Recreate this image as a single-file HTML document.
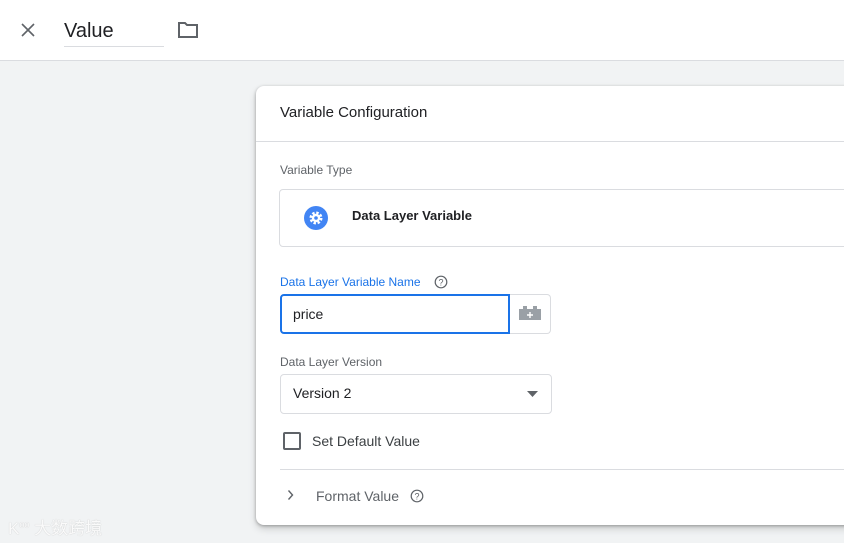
<!DOCTYPE html>
<html><head><style>
*{box-sizing:border-box;margin:0;padding:0}
body{width:844px;height:543px;overflow:hidden;background:#f1f3f4;font-family:"Liberation Sans",sans-serif;position:relative;color:#202124}
.top{position:absolute;left:0;top:0;width:844px;height:61px;background:#fff;border-bottom:1px solid #dadce0}
.abs{position:absolute}
.card{position:absolute;left:256px;top:86px;width:600px;height:439px;background:#fff;border-radius:8px;box-shadow:0 1px 3px rgba(0,0,0,.3),0 4px 8px rgba(0,0,0,.15)}
.lbl{font-size:12px;color:#5f6368}
</style></head><body>
<div class="top">
<svg class="abs" style="left:20px;top:22px" width="16" height="16" viewBox="0 0 16 16"><path d="M2 2L14 14M14 2L2 14" stroke="#5f6368" stroke-width="1.6"/></svg>
<div class="abs" style="left:64px;top:20px;font-size:20px;color:#202124">Value</div>
<div class="abs" style="left:64px;top:46px;width:100px;height:1px;background:#dadce0"></div>
<svg class="abs" style="left:177px;top:21px" width="22" height="18" viewBox="0 0 22 18"><path d="M2 2h6l2 2h10v12H2z" fill="none" stroke="#5f6368" stroke-width="2"/></svg>
</div>
<div class="card">
<div class="abs" style="left:24px;top:18px;font-size:15px;color:#202124">Variable Configuration</div>
<div class="abs" style="left:0;top:55px;width:600px;height:1px;background:#dadce0"></div>
<div class="abs lbl" style="left:24px;top:77px">Variable Type</div>
<div class="abs" style="left:23px;top:103px;width:600px;height:58px;border:1px solid #dadce0;border-radius:4px"></div>
<svg class="abs" style="left:47px;top:119px" width="26" height="26" viewBox="0 0 26 26"><circle cx="13" cy="13" r="12" fill="#4285f4"/><circle cx="13" cy="13" r="5.2" fill="none" stroke="#fff" stroke-width="2.6" stroke-dasharray="2.4 1.7"/><circle cx="13" cy="13" r="4.2" fill="#fff"/><circle cx="13" cy="13" r="1.8" fill="#4285f4"/></svg>
<div class="abs" style="left:96px;top:122px;font-size:13px;font-weight:bold;color:#202124">Data Layer Variable</div>
<div class="abs" style="left:24px;top:189px;font-size:12px;color:#1a73e8">Data Layer Variable Name</div>
<svg class="abs" style="left:178px;top:189px" width="14" height="14" viewBox="0 0 14 14"><circle cx="7" cy="7" r="5.8" fill="none" stroke="#5f6368" stroke-width="1.2"/><text x="7" y="10.5" font-size="9" text-anchor="middle" fill="#5f6368" font-family="Liberation Sans">?</text></svg>
<div class="abs" style="left:24px;top:208px;width:230px;height:40px;border:2px solid #1a73e8;border-radius:4px 0 0 4px"></div>
<div class="abs" style="left:37px;top:220px;font-size:14px;color:#202124">price</div>
<div class="abs" style="left:254px;top:208px;width:41px;height:40px;border:1px solid #dadce0;border-left:none;border-radius:0 4px 4px 0"></div>
<svg class="abs" style="left:262px;top:219px" width="24" height="16" viewBox="0 0 24 16"><path d="M1 4h4V1h4v3h6V1h4v3h4v11H1z" fill="#9aa0a6"/><path d="M12 7v6M9 10h6" stroke="#fff" stroke-width="1.4"/></svg>
<div class="abs lbl" style="left:24px;top:269px">Data Layer Version</div>
<div class="abs" style="left:24px;top:288px;width:272px;height:40px;border:1px solid #dadce0;border-radius:4px"></div>
<div class="abs" style="left:37px;top:299px;font-size:14px;color:#202124">Version 2</div>
<svg class="abs" style="left:271px;top:305px" width="12" height="6"><path d="M0 0h11L5.5 6z" fill="#5f6368"/></svg>
<div class="abs" style="left:27px;top:346px;width:18px;height:18px;border:2px solid #5f6368;border-radius:2px"></div>
<div class="abs" style="left:56px;top:347px;font-size:14px;color:#3c4043">Set Default Value</div>
<div class="abs" style="left:24px;top:383px;width:580px;height:1px;background:#dadce0"></div>
<svg class="abs" style="left:31px;top:403px" width="8" height="12"><path d="M1.5 1.5l4 4.5-4 4.5" fill="none" stroke="#5f6368" stroke-width="1.4"/></svg>
<div class="abs" style="left:60px;top:402px;font-size:14px;color:#5f6368">Format Value</div>
<svg class="abs" style="left:154px;top:403px" width="14" height="14" viewBox="0 0 14 14"><circle cx="7" cy="7" r="5.8" fill="none" stroke="#5f6368" stroke-width="1.2"/><text x="7" y="10.5" font-size="9" text-anchor="middle" fill="#5f6368" font-family="Liberation Sans">?</text></svg>
</div>
<div class="abs" style="left:8px;top:514px;font-size:17px;color:#fafafa;text-shadow:0 0 1px #bbb;font-family:'Liberation Sans','Noto Sans CJK SC',sans-serif">K<sup style="font-size:9px">oo</sup> 大数跨境</div>
</body></html>
